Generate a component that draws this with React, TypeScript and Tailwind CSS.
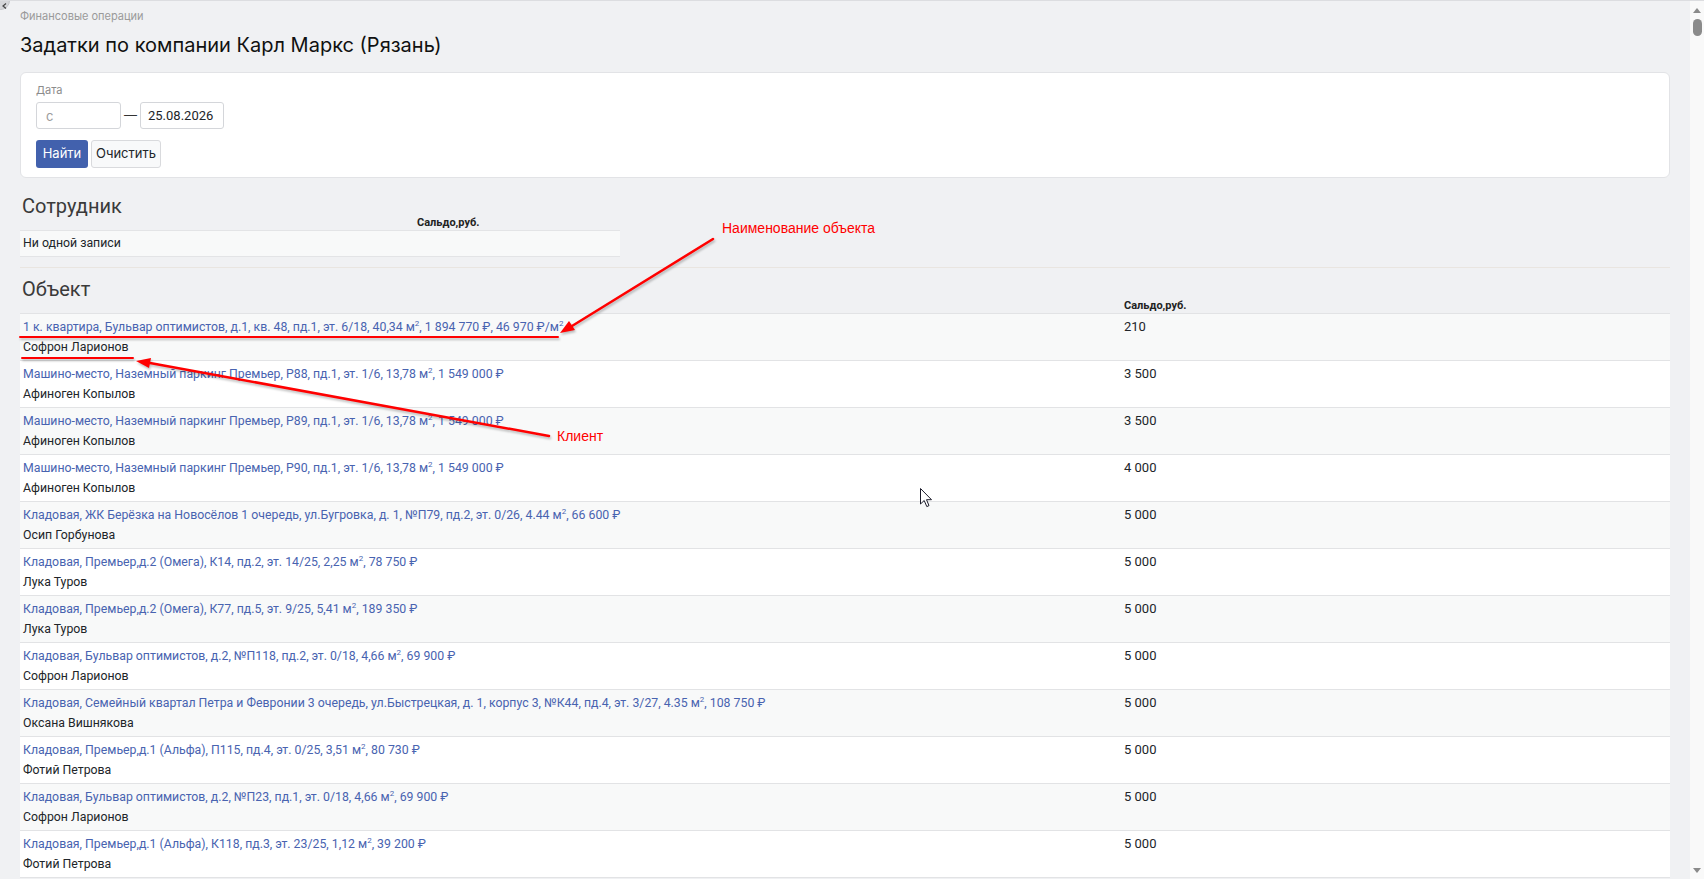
import React from 'react';

const M2 = () => <sup className="text-[8px] -top-[0.6em]">2</sup>;

const ROWS: { parts: string[]; client: string; saldo: string }[] = [
  { parts: ['1 к. квартира, Бульвар оптимистов, д.1, кв. 48, пд.1, эт. 6/18, 40,34 м', ', 1 894 770 ₽, 46 970 ₽/м', ''], client: 'Софрон Ларионов', saldo: '210' },
  { parts: ['Машино-место, Наземный паркинг Премьер, P88, пд.1, эт. 1/6, 13,78 м', ', 1 549 000 ₽'], client: 'Афиноген Копылов', saldo: '3 500' },
  { parts: ['Машино-место, Наземный паркинг Премьер, P89, пд.1, эт. 1/6, 13,78 м', ', 1 549 000 ₽'], client: 'Афиноген Копылов', saldo: '3 500' },
  { parts: ['Машино-место, Наземный паркинг Премьер, P90, пд.1, эт. 1/6, 13,78 м', ', 1 549 000 ₽'], client: 'Афиноген Копылов', saldo: '4 000' },
  { parts: ['Кладовая, ЖК Берёзка на Новосёлов 1 очередь, ул.Бугровка, д. 1, №П79, пд.2, эт. 0/26, 4.44 м', ', 66 600 ₽'], client: 'Осип Горбунова', saldo: '5 000' },
  { parts: ['Кладовая, Премьер,д.2 (Омега), К14, пд.2, эт. 14/25, 2,25 м', ', 78 750 ₽'], client: 'Лука Туров', saldo: '5 000' },
  { parts: ['Кладовая, Премьер,д.2 (Омега), К77, пд.5, эт. 9/25, 5,41 м', ', 189 350 ₽'], client: 'Лука Туров', saldo: '5 000' },
  { parts: ['Кладовая, Бульвар оптимистов, д.2, №П118, пд.2, эт. 0/18, 4,66 м', ', 69 900 ₽'], client: 'Софрон Ларионов', saldo: '5 000' },
  { parts: ['Кладовая, Семейный квартал Петра и Февронии 3 очередь, ул.Быстрецкая, д. 1, корпус 3, №К44, пд.4, эт. 3/27, 4.35 м', ', 108 750 ₽'], client: 'Оксана Вишнякова', saldo: '5 000' },
  { parts: ['Кладовая, Премьер,д.1 (Альфа), П115, пд.4, эт. 0/25, 3,51 м', ', 80 730 ₽'], client: 'Фотий Петрова', saldo: '5 000' },
  { parts: ['Кладовая, Бульвар оптимистов, д.2, №П23, пд.1, эт. 0/18, 4,66 м', ', 69 900 ₽'], client: 'Софрон Ларионов', saldo: '5 000' },
  { parts: ['Кладовая, Премьер,д.1 (Альфа), К118, пд.3, эт. 23/25, 1,12 м', ', 39 200 ₽'], client: 'Фотий Петрова', saldo: '5 000' },
];

function ObjectName({ parts }: { parts: string[] }) {
  // each part but the last ends with "м", followed by a superscript 2
  return (
    <a className="text-[#4863b0] cursor-pointer">
      {parts.map((p, i) => (
        <React.Fragment key={i}>
          {p}
          {i < parts.length - 1 && <M2 />}
        </React.Fragment>
      ))}
    </a>
  );
}

export default function App() {
  return (
    <div className="relative flex h-[879px] w-full overflow-hidden bg-[#f0f1f3] border-t border-[#dcdde0] text-[#212529] [font-family:Roboto,sans-serif]">
      {/* collapse button, mostly off-screen */}
      <div className="absolute -left-[9px] -top-[10px] w-[19px] h-[19px] rounded-full bg-[#d6d7da] border border-[#c4c5c8]">
        <svg className="absolute left-[10px] top-[11px]" width="5" height="6" viewBox="0 0 5 6">
          <path d="M4 0.5 L1 3 L4 5.5" fill="none" stroke="#444" strokeWidth="1.2" />
        </svg>
      </div>

      <main className="flex-1 px-5 pt-[9px]">
        <div className="text-[11px] leading-[13px] text-[#9a9a9a] [font-family:Inter,sans-serif]">Финансовые операции</div>
        <h1 className="mt-[8px] text-[20px] leading-[28px] text-[#111] [font-family:Inter,sans-serif]">Задатки по компании Карл Маркс (Рязань)</h1>

        {/* Filter card */}
        <div className="mt-[13px] rounded-md border border-[#e2e3e6] bg-white px-[15px] pt-[10px] pb-[9px] [font-family:Inter,sans-serif]">
          <div className="text-[11px] leading-[14px] text-[#8c8c8c]">Дата</div>
          <div className="mt-[5px] flex items-center gap-[3px]">
            <input
              placeholder="с"
              className="h-[27px] w-[85px] rounded-[3px] border border-[#d4d6da] px-[9px] text-[13px] placeholder:text-[#9c9c9c] outline-none"
            />
            <span className="text-[13px] text-[#333]">—</span>
            <input
              defaultValue="25.08.2026"
              className="h-[27px] w-[84px] rounded-[3px] border border-[#d4d6da] px-[7px] text-[13px] text-[#212529] outline-none [font-family:Roboto,sans-serif]"
            />
          </div>
          <div className="mt-[11px] flex gap-[3px]">
            <button className="h-[28px] w-[52px] rounded-[3px] bg-[#4261ad] text-[13px] text-white">Найти</button>
            <button className="h-[28px] w-[70px] rounded-[3px] border border-[#d9dadd] bg-[#f8f9fa] text-[13px] text-[#212529]">Очистить</button>
          </div>
        </div>

        {/* Сотрудник */}
        <h2 className="mt-[19px] pl-[2px] text-[20px] leading-[18px] text-[#3a3a3a]">Сотрудник</h2>
        <div className="w-[600px]">
          <div className="flex h-[15px] items-center">
            <div className="w-[394px]" />
            <div className="flex-1 px-[3px] text-[11px] font-bold leading-[15px] text-[#222]">Сальдо,руб.</div>
          </div>
          <div className="h-[27px] border-y border-[#e3e4e6] bg-[#f8f9f9] px-[3px] text-[12.3px] leading-[25px]">Ни одной записи</div>
        </div>

        <div className="mt-[10px] border-t border-[#e9e5e0]" />

        {/* Объект */}
        <h2 className="mt-[12px] pl-[2px] text-[20px] leading-[18px] text-[#3a3a3a]">Объект</h2>
        <div className="border-b border-[#e2e3e5]">
          <div className="flex h-[15px] items-center">
            <div className="w-2/3" />
            <div className="w-1/3 px-[4px] text-[11px] font-bold leading-[15px] text-[#222]">Сальдо,руб.</div>
          </div>
          {ROWS.map((r, i) => (
            <div
              key={i}
              className={`flex h-[47px] border-t border-[#e2e3e5] pt-[3px] text-[12.3px] leading-[20px] ${i % 2 === 0 ? 'bg-[#f8f9f9]' : 'bg-white'}`}
            >
              <div className="w-2/3 px-[3px]">
                <div><ObjectName parts={r.parts} /></div>
                <div>{r.client}</div>
              </div>
              <div className="w-1/3 px-[4px] text-[13px]">{r.saldo}</div>
            </div>
          ))}
        </div>
      </main>

      {/* scrollbar */}
      <div className="relative w-[14px] bg-[#f9f9f9] flex flex-col items-center">
        <div className="mt-[7px] h-0 w-0 border-x-[4px] border-b-[5px] border-x-transparent border-b-[#8a8a8a]" />
        <div className="mt-[6px] h-[17px] w-[9px] rounded-full bg-[#8b8b8b]" />
        <div className="mt-auto mb-[6px] h-0 w-0 border-x-[4px] border-t-[5px] border-x-transparent border-t-[#8a8a8a]" />
      </div>

      {/* annotations */}
      <svg className="pointer-events-none absolute inset-0" width="1704" height="879">
        <g fill="#ff0000" stroke="#ff0000" strokeLinecap="round" style={{ filter: 'drop-shadow(1px 2px 1px rgba(0,0,0,0.25))' }}>
          <line x1="20" y1="336" x2="558" y2="336" strokeWidth="2" />
          <line x1="22" y1="357" x2="133" y2="357" strokeWidth="2" />
          <line x1="713" y1="238" x2="572" y2="325" strokeWidth="2.5" />
          <polygon points="560,332 575,329 569,320" stroke="none" />
          <line x1="549" y1="435" x2="150" y2="362" strokeWidth="2.5" />
          <polygon points="136,360 151,357 149,367" stroke="none" />
        </g>
      </svg>
      <span className="pointer-events-none absolute left-[722px] top-[219px] text-[14px] leading-[16px] text-[#ff0000] [font-family:'Liberation_Sans',Arial,sans-serif]">
        Наименование объекта
      </span>
      <span className="pointer-events-none absolute left-[557px] top-[427px] text-[14px] leading-[16px] text-[#ff0000] [font-family:'Liberation_Sans',Arial,sans-serif]">
        Клиент
      </span>

      {/* mouse pointer */}
      <svg className="pointer-events-none absolute left-[920px] top-[487px]" width="13" height="20" viewBox="0 0 13 20">
        <path d="M0.5 0.5 L0.5 16 L4.2 12.5 L6.8 18.6 L9 17.6 L6.5 11.7 L11.5 11.7 Z" fill="#fff" stroke="#1b1b2a" strokeWidth="1" strokeLinejoin="round" />
      </svg>
    </div>
  );
}
